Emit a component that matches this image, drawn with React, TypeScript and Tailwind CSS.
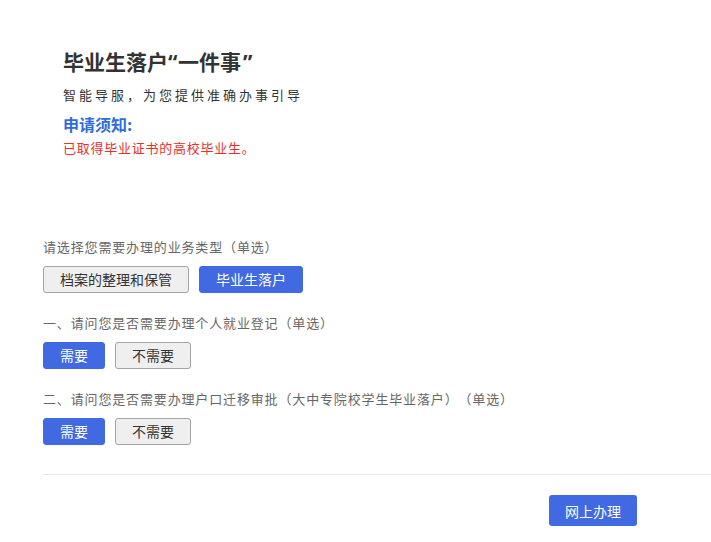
import React from "react";

const font = {
  fontFamily: '"Noto Sans CJK SC", "Noto Sans", sans-serif',
};

function Btn({ label, active }: { label: string; active?: boolean }) {
  return (
    <button
      className={
        active
          ? "h-[27px] px-4 rounded-[3px] border border-[#4169e1] bg-[#4169e1] text-white text-[14px] leading-none"
          : "h-[27px] px-4 rounded-[3px] border border-[#a3a3a3] bg-[#efefef] text-[#333] text-[14px] leading-none"
      }
    >
      {label}
    </button>
  );
}

function Question({ label, options, active }: { label: string; options: string[]; active: number }) {
  return (
    <div className="flex flex-col">
      <div className="text-[13px] tracking-[0.85px] leading-[20px] text-[#666] whitespace-nowrap">{label}</div>
      <div className="flex gap-[10px] mt-[8.5px]">
        {options.map((o, i) => (
          <Btn key={o} label={o} active={i === active} />
        ))}
      </div>
    </div>
  );
}

export default function App() {
  return (
    <div lang="zh-CN" className="w-[711px] h-[542px] bg-white overflow-hidden [text-spacing-trim:space-all]" style={font}>
      <div className="pl-[63px] pt-[47px] flex flex-col">
        <div className="h-[28px] text-[21px] leading-[28px] font-bold text-[#333] whitespace-nowrap">
          毕业生落户
          <span className="inline-block w-[10px] leading-none [font-family:'Noto_Sans',sans-serif]">“</span>
          一件事
          <span className="inline-block pl-[2px] leading-none [font-family:'Noto_Sans',sans-serif]">”</span>
        </div>
        <div className="mt-[10px] text-[13px] leading-[20px] text-[#333] tracking-[3px]">智能导服，为您提供准确办事引导</div>
        <div className="mt-[8px] text-[16px] leading-[22px] font-bold text-[#2f6bdc]">申请须知:</div>
        <div className="mt-[3px] text-[13px] tracking-[0.75px] leading-[20px] text-[#e8302c]">已取得毕业证书的高校毕业生。</div>
      </div>
      <div className="pl-[43px] mt-[79px] flex flex-col gap-[20.5px]">
        <Question label="请选择您需要办理的业务类型（单选）" options={["档案的整理和保管", "毕业生落户"]} active={1} />
        <Question label="一、请问您是否需要办理个人就业登记（单选）" options={["需要", "不需要"]} active={0} />
        <Question label="二、请问您是否需要办理户口迁移审批（大中专院校学生毕业落户）（单选）" options={["需要", "不需要"]} active={0} />
      </div>
      <div className="ml-[43px] mt-[29.5px] h-px bg-[#e8e8e8]" />
      <div className="mt-[20px] pl-[549px]">
        <button className="w-[88px] h-[31px] rounded-[3px] bg-[#4169e1] text-white text-[14px] leading-none">网上办理</button>
      </div>
    </div>
  );
}
